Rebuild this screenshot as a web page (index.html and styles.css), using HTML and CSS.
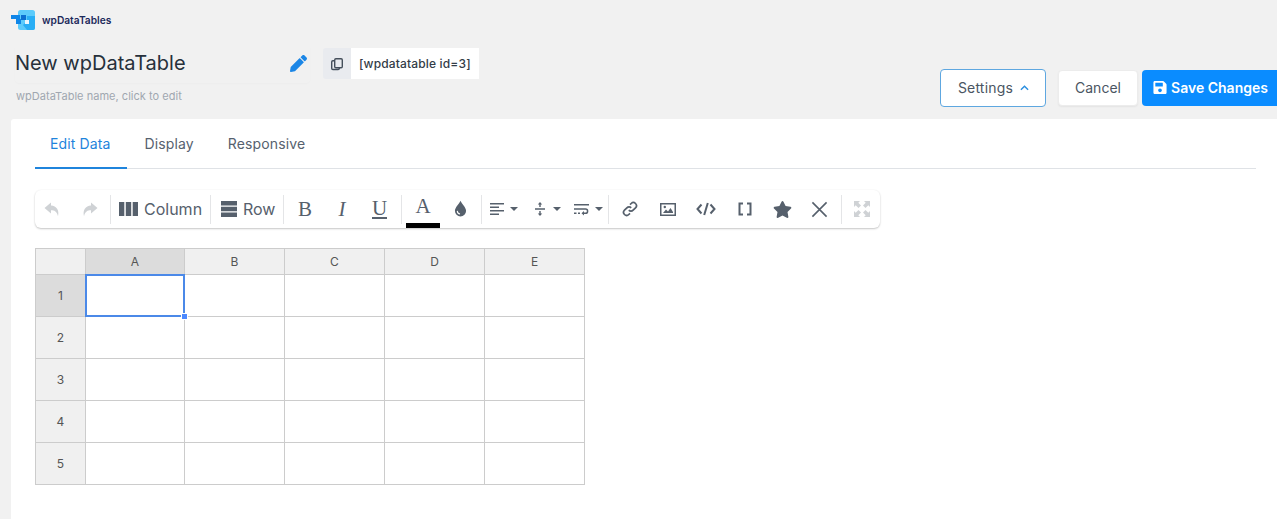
FILE: index.html
```html
<!DOCTYPE html>
<html lang="en">
<head>
<meta charset="utf-8">
<title>wpDataTables</title>
<link rel="stylesheet" href="styles.css">
</head>
<body>
<header class="top">
  <div class="brand">
    <svg class="brand-logo" viewBox="0 0 24 20" width="24" height="20">
      <rect x="7" y="0" width="17" height="20" rx="2.5" fill="#5ccbfb"/>
      <path d="M16 6h8v12a2 2 0 0 1-2 2h-6l-4-5 4-4z" fill="#29aef5"/>
      <rect x="0" y="5" width="9" height="4" fill="#0f86e8"/>
      <rect x="5" y="9" width="5" height="5" fill="#0f86e8"/>
      <rect x="10" y="5" width="5" height="5" fill="#0b6fd0"/>
      <rect x="14" y="10" width="4" height="4" fill="#eaf7ff"/>
    </svg>
    <span class="brand-name">wpDataTables</span>
  </div>
  <div class="head-row">
    <div class="name-col">
      <div class="name-field">
        <span class="name-text">New wpDataTable</span>
        <svg class="pencil" viewBox="0 0 512 512" width="17" height="17"><path fill="currentColor" d="M497.9 142.1l-46.1 46.1c-4.7 4.7-12.3 4.7-17 0l-111-111c-4.7-4.7-4.7-12.3 0-17l46.1-46.1c18.7-18.7 49.1-18.7 67.9 0l60.1 60.1c18.8 18.7 18.8 49.1 0 67.9zM284.2 99.8L21.6 362.4.4 483.9c-2.9 16.4 11.4 30.6 27.8 27.8l121.5-21.3 262.6-262.6c4.7-4.7 4.7-12.3 0-17l-111-111c-4.8-4.7-12.4-4.7-17.1 0z"/></svg>
      </div>
      <div class="name-help">wpDataTable name, click to edit</div>
    </div>
    <div class="shortcode">
      <span class="copy-btn">
        <svg viewBox="0 0 14 14" width="14" height="14" fill="none" stroke="#454f5b" stroke-width="1.4"><rect x="4.7" y="1.7" width="7.6" height="9" rx="1.2"/><path d="M4.7 3.7H2.9a1.2 1.2 0 0 0-1.2 1.2v6.4a1.2 1.2 0 0 0 1.2 1.2h5.2a1.2 1.2 0 0 0 1.2-1.2v-.6"/></svg>
      </span>
      <span class="shortcode-text">[wpdatatable id=3]</span>
    </div>
    <div class="actions">
      <button class="btn btn-settings">Settings
        <svg viewBox="0 0 10 6" width="9" height="6" fill="none" stroke="#2b8fe0" stroke-width="1.6"><path d="M1 5l4-4 4 4"/></svg>
      </button>
      <button class="btn btn-cancel">Cancel</button>
      <button class="btn btn-save">
        <svg viewBox="0 0 448 512" width="14" height="15"><path fill="currentColor" d="M433.941 129.941l-83.882-83.882A48 48 0 0 0 316.118 32H48C21.49 32 0 53.49 0 80v352c0 26.51 21.49 48 48 48h352c26.51 0 48-21.49 48-48V163.882a48 48 0 0 0-14.059-33.941zM224 416c-35.346 0-64-28.654-64-64 0-35.346 28.654-64 64-64s64 28.654 64 64c0 35.346-28.654 64-64 64zm96-304.52V212c0 6.627-5.373 12-12 12H76c-6.627 0-12-5.373-12-12V108c0-6.627 5.373-12 12-12h228.52c3.183 0 6.235 1.264 8.485 3.515l3.48 3.48A11.996 11.996 0 0 1 320 111.48z"/></svg>
        Save Changes
      </button>
    </div>
  </div>
</header>

<main class="panel">
  <nav class="tabs">
    <a class="tab tab-active">Edit Data</a>
    <a class="tab">Display</a>
    <a class="tab">Responsive</a>
  </nav>

  <div class="toolbar">
    <span class="tool muted"><svg viewBox="0 0 16 15" width="16" height="15"><path fill="currentColor" d="M7 .5L.5 6l6.500 5.500V8.200c3.500 0 5.800 1 7 6 1.500-6.200-1.500-10.200-7-10.600z"/></svg></span>
    <span class="tool muted"><svg viewBox="0 0 16 15" width="16" height="15"><path fill="currentColor" d="M9 .5L15.500 6 9 11.500V8.200c-3.500 0-5.800 1-7 6-1.500-6.200 1.500-10.200 7-10.600z"/></svg></span>
    <span class="sep"></span>
    <span class="tool tool-label tool-col">
      <svg viewBox="0 0 19 14" width="19" height="14"><path fill="currentColor" d="M0 0h5.300v14H0zM6.800 0h5.400v14H6.800zM13.700 0H19v14h-5.300z"/></svg>Column
    </span>
    <span class="sep"></span>
    <span class="tool tool-label tool-row">
      <svg viewBox="0 0 16 16" width="16" height="16"><path fill="currentColor" d="M0 0h16v4.500H0zM0 5.800h16v4.400H0zM0 11.500h16V16H0z"/></svg>Row
    </span>
    <span class="sep"></span>
    <span class="tool letter">B</span>
    <span class="tool letter letter-i">I</span>
    <span class="tool letter"><span class="letter-u">U</span></span>
    <span class="sep"></span>
    <span class="tool tool-color">
      <span class="letter letter-a">A</span>
      <span class="color-bar"></span>
    </span>
    <span class="tool tool-drop">
      <svg viewBox="0 0 14 18" width="13" height="18"><path fill="currentColor" d="M7 0c1 3 6 7 6 11a6 6 0 0 1-12 0C1 7 6 3 7 0z"/><path fill="none" stroke="#fff" stroke-width="1.1" d="M3.500 11a3.500 3.500 0 0 0 3 3.300"/></svg>
    </span>
    <span class="sep"></span>
    <span class="tool tool-menu">
      <svg viewBox="0 0 14 14" width="14" height="14"><path fill="currentColor" d="M0 1h14v1.500H0zM0 4.500h9V6H0zM0 8h14v1.500H0zM0 11.500h9V13H0z"/></svg><i class="caret"></i>
    </span>
    <span class="tool tool-menu tool-menu-mid">
      <svg viewBox="0 0 10 14" width="10" height="14"><path fill="currentColor" d="M0 6.300h10v1.400H0zM5 0l2.200 2.500H5.700V5H4.300V2.500H2.800zM5 14l-2.200-2.500h1.500V9h1.400v2.500h1.500z"/></svg><i class="caret"></i>
    </span>
    <span class="tool tool-menu">
      <svg viewBox="0 0 15 14" width="15" height="14"><path fill="currentColor" d="M0 2h15v1.500H0zM0 6.300h11.500a2.800 2.800 0 0 1 0 5.700H10v1.500L7.500 11.200 10 9v1.500h1.500a1.300 1.300 0 0 0 0-2.700H0zM0 10.500h2.500V12H0zM4 10.500h2V12H4z"/></svg><i class="caret"></i>
    </span>
    <span class="sep"></span>
    <span class="tool"><svg viewBox="0 0 16 16" width="16" height="16" fill="none" stroke="currentColor" stroke-width="1.700"><path d="M6.800 9.200a3 3 0 0 0 4.300 0l2.400-2.400a3 3 0 0 0-4.300-4.300L8 3.700"/><path d="M9.200 6.800a3 3 0 0 0-4.300 0L2.500 9.200a3 3 0 0 0 4.300 4.300L8 12.300"/></svg></span>
    <span class="tool"><svg viewBox="0 0 16 13" width="16" height="13"><path fill="currentColor" fill-rule="evenodd" d="M0 0h16v13H0zM1.500 1.500v10h13v-10z"/><path fill="currentColor" d="M3 10l3-3.500 2 2 2.500-3.500L13 9v1z"/><circle cx="4.800" cy="4" r="1.200" fill="currentColor"/></svg></span>
    <span class="tool"><svg viewBox="0 0 20 14" width="20" height="14" fill="none" stroke="currentColor" stroke-width="2"><path d="M5.500 2.500L1.500 7l4 4.500M14.500 2.500l4 4.500-4 4.500M11.800 1L8.200 13"/></svg></span>
    <span class="tool"><svg viewBox="0 0 14 14" width="14" height="14" fill="none" stroke="currentColor" stroke-width="2"><path d="M5 1.500H1.500v11H5M9 1.500h3.500v11H9"/></svg></span>
    <span class="tool"><svg viewBox="0 0 576 512" width="19" height="17"><path fill="currentColor" d="M259.300 17.800L194 150.200 47.900 171.500c-26.200 3.800-36.700 36.100-17.700 54.600l105.700 103-25 145.500c-4.500 26.300 23.200 46 46.400 33.700L288 439.600l130.700 68.700c23.200 12.200 50.900-7.400 46.400-33.700l-25-145.500 105.700-103c19-18.500 8.500-50.800-17.700-54.600L382 150.200 316.700 17.800c-11.700-23.600-45.600-23.900-57.400 0z"/></svg></span>
    <span class="tool tool-x"><svg viewBox="0 0 18 18" width="17" height="17" fill="none" stroke="currentColor" stroke-width="1.700"><path d="M1.500 1.500l15 15M16.500 1.500l-15 15"/></svg></span>
    <span class="sep"></span>
    <span class="tool muted tool-full"><svg viewBox="0 0 16 16" width="16" height="16"><path fill="currentColor" d="M0 0h6L4.300 1.700 7 4.500 4.500 7 1.700 4.300 0 6zM16 0v6l-1.700-1.700L11.500 7 9 4.500l2.700-2.800L10 0zM0 16v-6l1.700 1.700L4.500 9 7 11.500l-2.700 2.800L6 16zM16 16h-6l1.700-1.700L9 11.500 11.500 9l2.800 2.700L16 10z"/></svg></span>
  </div>

  <table class="sheet">
    <thead>
      <tr>
        <th class="corner"></th>
        <th class="head-on col-first">A</th>
        <th>B</th>
        <th>C</th>
        <th>D</th>
        <th>E</th>
      </tr>
    </thead>
    <tbody>
      <tr><th class="head-on">1</th><td class="cell-on"><span class="selection"><i class="handle"></i></span></td><td></td><td></td><td></td><td></td></tr>
      <tr><th>2</th><td></td><td></td><td></td><td></td><td></td></tr>
      <tr><th>3</th><td></td><td></td><td></td><td></td><td></td></tr>
      <tr><th>4</th><td></td><td></td><td></td><td></td><td></td></tr>
      <tr><th>5</th><td></td><td></td><td></td><td></td><td></td></tr>
    </tbody>
  </table>
</main>
</body>
</html>
```
FILE: styles.css
```css
* { box-sizing: border-box; }

html, body { height: 100%; }

body {
  margin: 0;
  background: #f1f1f1;
  font-family: Inter, "Noto Sans", sans-serif;
  color: #4a5562;
  display: flex;
  flex-direction: column;
  overflow: hidden;
}

/* header */
.top { flex: none; height: 119px; }

.brand {
  display: flex;
  align-items: center;
  gap: 7px;
  padding: 10px 0 0 11px;
  height: 30px;
}
.brand-logo { flex: none; }
.brand-name { font-size: 10.200px; font-weight: 600; color: #1d2a5b; }

.head-row {
  display: flex;
  align-items: flex-start;
  padding: 14px 0 0 15px;
}

.name-field {
  width: 295px;
  height: 39px;
  display: flex;
  align-items: center;
  justify-content: space-between;
  padding: 0 3px 1px 0;
  border-radius: 4px;
  box-shadow: 0 1px 2px rgba(0, 0, 0, .02);
}
.name-text { font-size: 20px; color: #26303b; line-height: 1; }
.pencil { color: #1b86e6; }

.name-help {
  margin: 7px 0 0 1px;
  font-size: 11px;
  letter-spacing: .03px;
  line-height: 13px;
  color: #a0a7b0;
}

.shortcode {
  display: flex;
  height: 31px;
  margin: 4px 0 0 13px;
}
.copy-btn {
  width: 28px;
  display: flex;
  align-items: center;
  justify-content: center;
  background: #e9ebef;
  border-radius: 3px 0 0 3px;
}
.shortcode-text {
  width: 128px;
  display: flex;
  align-items: center;
  padding-left: 8px;
  background: #fff;
  font-size: 12px;
  letter-spacing: .15px;
  font-weight: 500;
  color: #333c47;
}

.actions {
  margin: 25px 0 0 auto;
  display: flex;
  align-items: center;
}

.btn {
  display: flex;
  align-items: center;
  justify-content: center;
  height: 36px;
  border: 0;
  font: inherit;
  font-size: 14px;
  border-radius: 4px;
  padding-bottom: 2px;
}
.btn-settings {
  width: 106px;
  height: 38px;
  gap: 7px;
  margin-right: 12px;
  padding-left: 7px;
  background: #fff;
  border: 1px solid #5ea7e0;
  color: #4a5562;
  letter-spacing: .2px;
}
.btn-cancel {
  width: 80px;
  margin-right: 4px;
  background: #fff;
  border: 1px solid #ececec;
  box-shadow: 0 1px 2px rgba(0, 0, 0, .06);
  color: #4a5562;
}
.btn-save {
  width: 135px;
  gap: 4px;
  padding-right: 4px;
  background: #0a8cff;
  color: #fff;
  font-weight: 600;
  border-radius: 4px 0 0 4px;
}

/* panel */
.panel {
  flex: 1;
  margin-left: 11px;
  padding: 0 21px 0 24px;
  background: #fff;
  border-radius: 3px 0 0 0;
}

.tabs {
  display: flex;
  height: 50px;
  border-bottom: 1px solid #dfe2e6;
}
.tab {
  height: 50px;
  padding: 0 15px;
  font-size: 14px;
  letter-spacing: .13px;
  line-height: 50px;
  color: #56616e;
}
.tab-active { padding-right: 16px; }
.tab + .tab { padding: 0 19px 0 18px; }
.tab:nth-child(3) { padding-left: 15px; }
.tab-active {
  color: #1f84dc;
  border-bottom: 2px solid #1f84dc;
}

/* toolbar */
.toolbar {
  display: grid;
  grid-template-columns:
    34px 41px 1px 99px 1px 72px 1px 42px 32px 43px 1px 42px 37px 1px
    42px 42px 42px 1px 41px 35px 42px 35px 41px 38px 1px 38px;
  align-items: center;
  width: 845px;
  height: 38px;
  margin-top: 21px;
  padding-bottom: 1px;
  border-radius: 6px;
  background: #fff;
  box-shadow: 0 1px 2px rgba(0, 0, 0, .22), 0 0 2px rgba(0, 0, 0, .04);
  color: #56606c;
}

.tool {
  display: flex;
  align-items: center;
  justify-content: center;
  height: 29px;
}
.muted { color: #cfd2d5; }
.sep { width: 1px; height: 29px; background: #e4e5e7; }

.tool-label { justify-content: flex-start; gap: 6px; font-size: 16px; }
.tool-col { padding-left: 8px; }
.tool-row { padding-left: 10px; }

.letter {
  font-family: "Liberation Serif", serif;
  font-size: 21px;
  color: #56606c;
}
.letter-i { font-style: italic; }
.letter-u {
  display: block;
  line-height: 17px;
  border-bottom: 2px solid #56606c;
}

.tool-color {
  flex-direction: column;
  justify-content: flex-start;
  height: 38px;
}
.letter-a { height: 33px; line-height: 33px; }
.color-bar { width: 34px; height: 5px; background: #000; }

.tool-drop { padding-right: 5px; }
.tool-x { padding-right: 5px; }
.tool-full { padding-left: 1px; }

.tool-menu { justify-content: flex-start; gap: 6px; padding-left: 8px; }
.tool-menu-mid { padding-left: 11px; gap: 8px; }
.caret {
  width: 0;
  height: 0;
  border-left: 4px solid transparent;
  border-right: 4px solid transparent;
  border-top: 4px solid currentColor;
}

/* sheet */
.sheet {
  margin-top: 20px;
  border-collapse: collapse;
  table-layout: fixed;
  width: 549px;
  font-size: 12px;
}
.sheet th, .sheet td {
  border: 1px solid #ccc;
  padding: 0;
}
.sheet th {
  background: #f0f0f0;
  font-weight: 400;
  color: #555;
}
.sheet thead th { height: 26px; width: 100px; }
.sheet thead th.corner { width: 50px; }
.sheet thead th.col-first { width: 99px; }
.sheet tbody tr { height: 42px; }
.sheet th.head-on { background: #dcdcdc; }

.cell-on { position: relative; }
.selection {
  position: absolute;
  inset: -1px;
  border: 2px solid #4b89e8;
}
.handle {
  position: absolute;
  right: -5px;
  bottom: -5px;
  width: 7px;
  height: 7px;
  background: #4b89ff;
  border: 1px solid #fff;
}
```
